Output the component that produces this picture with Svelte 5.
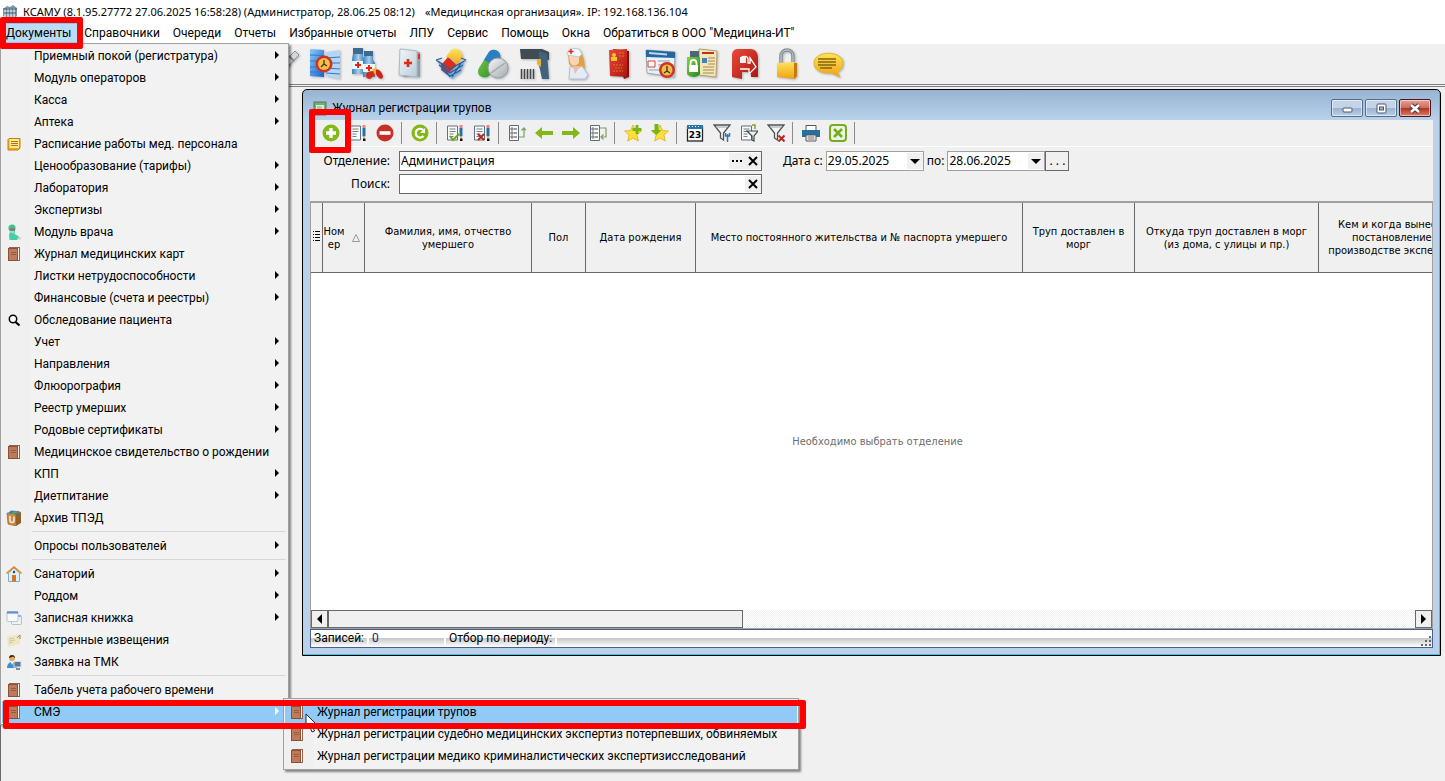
<script lang="ts">
  interface MenuItem {
    text?: string;
    icon?: string;
    sub?: boolean;
    sep?: boolean;
  }

  const topMenu = ['Документы', 'Справочники', 'Очереди', 'Отчеты', 'Избранные отчеты', 'ЛПУ', 'Сервис', 'Помощь', 'Окна', 'Обратиться в ООО "Медицина-ИТ"'];

  const menu: MenuItem[] = [
    { text: 'Приемный покой (регистратура)', sub: true },
    { text: 'Модуль операторов', sub: true },
    { text: 'Касса', sub: true },
    { text: 'Аптека', sub: true },
    { text: 'Расписание работы мед. персонала', icon: 'note' },
    { text: 'Ценообразование (тарифы)', sub: true },
    { text: 'Лаборатория', sub: true },
    { text: 'Экспертизы', sub: true },
    { text: 'Модуль врача', icon: 'surgeon', sub: true },
    { text: 'Журнал медицинских карт', icon: 'book' },
    { text: 'Листки нетрудоспособности', sub: true },
    { text: 'Финансовые (счета и реестры)', sub: true },
    { text: 'Обследование пациента', icon: 'search' },
    { text: 'Учет', sub: true },
    { text: 'Направления', sub: true },
    { text: 'Флюорография', sub: true },
    { text: 'Реестр умерших', sub: true },
    { text: 'Родовые сертификаты', sub: true },
    { text: 'Медицинское свидетельство о рождении', icon: 'book' },
    { text: 'КПП', sub: true },
    { text: 'Диетпитание', sub: true },
    { text: 'Архив ТПЭД', icon: 'archive' },
    { sep: true },
    { text: 'Опросы пользователей', sub: true },
    { sep: true },
    { text: 'Санаторий', icon: 'house', sub: true },
    { text: 'Роддом', sub: true },
    { text: 'Записная книжка', icon: 'windows', sub: true },
    { text: 'Экстренные извещения', icon: 'letter' },
    { text: 'Заявка на ТМК', icon: 'person' },
    { sep: true },
    { text: 'Табель учета рабочего времени', icon: 'book' }
  ];

  const submenu = [
    'Журнал регистрации трупов',
    'Журнал регистрации судебно медицинских экспертиз потерпевших, обвиняемых',
    'Журнал регистрации медико криминалистических экспертизисследований'
  ];

  const small: Record<string, string> = {
    app: '<path d="M1 5l4-3 3 1 3-2 4 3v8l-4 3-3-1-3 1-4-3z" fill="#7b96a6"/><path d="M3 5v8M6 4v10M9 4v10M12 4v9" stroke="#dfeaf0" stroke-width="1.3"/><path d="M1 5h14M2 9h12" stroke="#3f5666"/>',
    note: '<path d="M3 2.500h11v9.500l-2 2H2V3.500z" fill="#f0a820" stroke="#c98008"/><rect x="3.500" y="3" width="9.500" height="9" fill="#ffe890"/><path d="M5 5.500h7M5 7.500h7M5 9.500h7" stroke="#a87b18"/>',
    surgeon: '<circle cx="6" cy="4" r="3.600" fill="#3fbf9b"/><path d="M4 4.500h5v2H4z" fill="#a06a50"/><path d="M4 7h5l-.5 3L13 12.500l-2 3.500H3.500L3 11z" fill="#49cda8"/><path d="M4 7h4v2H4.500z" fill="#8fe6cd"/><path d="M12 14l3-1v2l-4 1z" fill="#ccc"/>',
    book: '<path d="M3 1h11v14H3z" fill="#96604a"/><path d="M4 2h8.500v1H4zM12 2h1v12h-1z" fill="#fbf3ee"/><rect x="2" y="2" width="10" height="13" fill="#8a5139"/><rect x="3" y="3" width="8" height="11" fill="#bf7a5c"/><path d="M5 6.500h5M5 8.500h5" stroke="#9a5a40"/>',
    search: '<circle cx="7" cy="7" r="3.700" fill="#fff" stroke="#000" stroke-width="1.500"/><path d="M9.500 10l4 3.500" stroke="#000" stroke-width="2.200"/>',
    archive: '<path d="M1 3l9 1v12l-8-2z" fill="#c98b45" stroke="#8a5a24" stroke-width=".6"/><path d="M10 4l5-2v11l-5 3z" fill="#945f27"/><path d="M2 3l3-2.500 6 .5 4 1-5 2.500z" fill="#2d7fd0"/><path d="M6 2l5-1v2l-4 1z" fill="#4fae35"/><path d="M11 1l2 .5-1 1z" fill="#d33"/><path d="M4 6v4.500c0 2.500 4 2.500 4 0V6.500" fill="none" stroke="#f5ead8" stroke-width="1.500"/>',
    house: '<path d="M2.500 7L8 2l5.500 5v8.500h-11z" fill="#d9effa" stroke="#7eb0cb"/><path d="M.5 7.500L8 1l7.500 6.500" fill="none" stroke="#e58b2c" stroke-width="1.600"/><rect x="6" y="9" width="4" height="6.500" fill="#d9751c"/><circle cx="8" cy="6" r="1.200" fill="#27455c"/>',
    windows: '<rect x="5.500" y="5.500" width="10" height="9" rx="1" fill="#eef1f4" stroke="#b4bfc8"/><path d="M11 6h4" stroke="#8eb0dc" stroke-width="2"/><rect x="1" y="1.500" width="11" height="10" rx="1" fill="#f7f9fb" stroke="#bac5ce"/><path d="M1 2.500h11" stroke="#6292d6" stroke-width="2.200"/>',
    letter: '<path d="M1 4l14-2-1 10-12 3z" fill="#eee6c4"/><path d="M3 7l5-1M3 9l6-1M3 11l4-.6" stroke="#d3c69a"/><path d="M11 6l3-3v4" stroke="#8e8e84" fill="none"/>',
    person: '<circle cx="6" cy="4" r="3" fill="#e3a65a"/><path d="M3 4c0-4 6-4 6 0L7 2.500z" fill="#30251c"/><path d="M1 14c0-8 10-8 10 0z" fill="#3f8fd0"/><path d="M5 8l1 3 1.500-3z" fill="#fff"/><rect x="8" y="7.500" width="7" height="5.500" fill="#587b96" stroke="#d4dde4"/><path d="M10 15h4" stroke="#667" stroke-width="1.500"/>',
    green: '<rect x="2" y="2" width="12" height="13" fill="#6fae74" stroke="#4c7f56"/><path d="M4 5h8v7H4z" fill="#d9efd6"/><path d="M5 7h5M5 9h5" stroke="#6fae74"/>'
  };

  // 32x32 pictures of the main toolbar
  const big: [string, string][] = [
    ['Процедуры', '<path d="M8 27L24 7l4-4 4 4-4 4L14 26z" fill="#d5d8da" stroke="#8d9296"/><path d="M22 8l5 5M18 13l5 5" stroke="#85898d" stroke-width="2"/>'],
    ['Расписание', '<path d="M1 1l14 1v27L1 28z" fill="url(#blue)"/><path d="M17 4l14-2v29l-14-3z" fill="#b4d6f3"/><path d="M1 7l14 .5M1 13h14M1 19h14M1 24h14M17 10l14-1M17 15h14M17 20l14 1M17 25l14 1" stroke="#2f78c8"/><circle cx="15" cy="16" r="8.500" fill="#cf3224"/><circle cx="15" cy="16" r="6" fill="#f5bf48"/><path d="M15 12v4l-3 3M15 16l3 2" fill="none" stroke="#40331d" stroke-width="1.300"/>'],
    ['Аптека', '<path d="M2 5h10v4l2 3v14H1V12z" fill="url(#glass)"/><path d="M13 8h9v4l2 3v14H12V14z" fill="url(#glass)"/><path d="M2 0h10v6H2zM13 3h9v5h-9z" fill="#3e6991"/><path d="M1 13h11v8H1zM12 16h12v8H12z" fill="#eef6fa"/><path d="M7 14v6M4 17h6M18 17v6M15 20h6" stroke="#e02418" stroke-width="2"/><path d="M15 27c0-3 3-4 8-4l1 4-5 4c-2 0-4-1-4-3z" fill="#d4281b"/><path d="M21 21l4-1 3 4-4 3z" fill="#f4b71b"/><path d="M25 22c3-2 7 4 7 7-1 3-5 2-7-3z" fill="#ce2418"/>'],
    ['Медкарта', '<path d="M12 4h15v25H10z" fill="#8f9ea8"/><path d="M7 1l17 2v26L6 27z" fill="url(#page)" stroke="#a9b9c3"/><path d="M25 6h2v5h-2z" fill="#d62f22"/><path d="M15 11v8M11 15h8" stroke="#e1271b" stroke-width="2.600"/>'],
    ['Закупки', '<path d="M2 12l13 9 15-9-4 12-9 7-10-8z" fill="#7fb0dc"/><path d="M6 17l7-8 9 8-7 7c-5 1-9-2-9-7z" fill="#dd2d1f"/><path d="M11 9l5-7c5-4 14 2 11 8l-6 8c0-5-4-8-10-9z" fill="url(#gold)"/><path d="M1 12l14 9 16-9M4 17l11 8 13-8M6 21l9 7 11-6M6 15l9 14M26 15l-9 14M1 12l6-2M26 10l5 2" fill="none" stroke="#2a5f98" stroke-width="1.300"/>'],
    ['Препараты', '<path d="M12 4c5-6 15 1 10 9l-9 14c-6 6-15 0-11-7z" fill="url(#green)"/><path d="M12 4c5-6 15 1 10 9l-3 5-12-6z" fill="#2b7dc4"/><circle cx="21" cy="20" r="10" fill="url(#silver)" stroke="#969da2"/><path d="M14 25l14-10" stroke="#a0a7ab" stroke-width="1.500"/>'],
    ['Сканер', '<path d="M1 1h22l7 3v8l-9-1H2z" fill="#414b52"/><path d="M20 3l8 3 1 11 1 14h-7l-3-14z" fill="#43627c"/><path d="M18 11h4v8l-4-3z" fill="#e3b52f"/><path d="M2.500 21v10M5.500 21v10M8.500 21v10M11.500 21v10M14.500 21v10" stroke="#444" stroke-width="1.500"/>'],
    ['Медсестра', '<path d="M7 5c4-6 15-3 16 7l1 8-8 2-8-6z" fill="#e0a23d"/><path d="M8 8c1-3 9-3 10 1v5c-1 4-8 5-9 0z" fill="#f9d5b2"/><path d="M6 5l4-5 8 1 3 5-3 3-11-2z" fill="#f3f7fa" stroke="#c1c9cf"/><path d="M10 1v5M7.500 3.500h5" stroke="#e1291c" stroke-width="1.500"/><path d="M9 18l6 3 6-3 6 9-3 4H8z" fill="#e5ebf4" stroke="#b4bfcc"/><path d="M12 18l2 8 5-8z" fill="#f3b9a6"/>'],
    ['Журнал', '<path d="M10 1l16 2v26l-5 2z" fill="#80140d"/><path d="M6 2l18-1v28L7 28z" fill="url(#red)"/><path d="M8 9h6v4H8z" fill="#f4c52b"/><circle cx="11" cy="7" r="2" fill="#f4c52b"/><path d="M16 5h5M16 8h5M10 17h10M12 20h7M10 23h10" stroke="#e37427" stroke-dasharray="2 1"/>'],
    ['Календарь', '<path d="M1 2l29 2-1 25-27-4z" fill="#edf1f4" stroke="#9aa8b5"/><path d="M1 2l29 2v6L1 9z" fill="#22669f"/><path d="M4 5l18 1.500" stroke="#bcd9ef" stroke-width="2"/><path d="M3 13h7v6H3z" fill="#fff" stroke="#d9423a"/><path d="M13 13h12M13 17h8M4 22h10" stroke="#b0bbc3" stroke-width="1.500"/><circle cx="22" cy="22" r="8" fill="#cb3427"/><circle cx="22" cy="22" r="5.500" fill="#f2bc48"/><path d="M22 18v5l-3 2M22 23l3 2" fill="none" stroke="#352d22" stroke-width="1.300"/>'],
    ['Доступ', '<path d="M12 1l18 2-1 26-17-2z" fill="#f5e6b5" stroke="#b49e65"/><path d="M15 5h12" stroke="#bd3028" stroke-width="2"/><path d="M15 10h5v5h-5z" fill="#3c83bd"/><path d="M21 10h7M21 13h7M21 16h7M16 19h11M16 22h11M16 25h11" stroke="#a18959"/><path d="M3 3h9v7H3z" fill="#516674"/><path d="M0 9h13v17c-3 4-10 4-13 0z" fill="url(#green)"/><path d="M3.500 18v-3c0-4 6-4 6 0v3" fill="none" stroke="#fff" stroke-width="1.800"/><rect x="2" y="17" width="9" height="7" fill="#fff"/>'],
    ['Выход', '<path d="M3 6c1-4 3-5 7-5h11c6 0 8 4 8 9v19h-7v-3l-4-2h-5v7l-10-2z" fill="url(#red)"/><path d="M11 9h6v6h-6z" fill="#efefef"/><path d="M12 15v-4c0-4 7-3 7 0v4h2v-5l6 9-7 7v-5h-9" fill="none" stroke="#fff" stroke-width="1.300"/>'],
    ['Блокировка', '<path d="M10 16V8c0-8 12-8 12 0v7" fill="none" stroke="#848d94" stroke-width="3.500"/><path d="M10 16V8c0-8 12-8 12 0v7" fill="none" stroke="#ccd3d7"/><path d="M6 15l17-1 3 1v13l-3 3-17-2z" fill="url(#gold)"/><path d="M23 15h3v13l-3 3z" fill="#c37b0e"/>'],
    ['Сообщения', '<path d="M1 15c0-13 29-13 29 0 0 5-3 8-6 9l3 5-9-4C8 26 1 22 1 15z" fill="url(#gold)" stroke="#e3b42a"/><path d="M5 11h18M5 14h18M5 17h18M7 20h12" stroke="#84660f" stroke-width="1.300"/>']
  ];

  const sheet = '<path d="M1.500 2h10v14h-10z" fill="#f7f9fa" stroke="#60717c"/><path d="M3.500 5h6M3.500 7.500h6M3.500 10h4M3.500 12.500h4" stroke="#73828b"/>';
  const pencil = '<path d="M13.500 1h3v3h-3z" fill="#e68383"/><path d="M13.500 4h3v8h-3z" fill="#2a6ea3"/><path d="M13.500 12h3L15 15z" fill="#dba65e"/><path d="M14 14.500h2.500V17H14z" fill="#111"/>';
  const tree = '<path d="M1.500 1.500h9v15h-9z" fill="#f7f9fa" stroke="#5b6d78"/><path d="M3 4h2v2H3zM3 8h2v2H3zM3 12h2v2H3z" fill="none" stroke="#555" stroke-width=".8"/><path d="M6 5h3M6 9h3M6 13h3" stroke="#444"/>';
  const funnel = '<path d="M1 1h16l-6.500 8v7l-3-2V9z" fill="#f5f5f5" stroke="#4c5459" stroke-width="1.300"/><path d="M3 3h11" stroke="#9da5a9"/>';
  const star = '<path d="M9 1l2.400 5.500 6 .5-4.500 4 1.400 6L9 14l-5.300 3 1.400-6L.6 7l6-.5z" fill="#ffdf38" stroke="#dcae20" stroke-width=".8"/>';

  // null is a divider
  const tools: ([string, string] | null)[] = [
    ['Добавить', '<circle cx="9" cy="9" r="8.500" fill="#82b817"/><path d="M9 4v10M4 9h10" stroke="#fff" stroke-width="3.400"/>'],
    ['Изменить', sheet + pencil],
    ['Удалить', '<circle cx="9" cy="9" r="8.500" fill="#c63127"/><path d="M3.500 9h11" stroke="#fff" stroke-width="3.600"/>'],
    null,
    ['Обновить', '<circle cx="9" cy="9" r="8.500" fill="#82b817"/><path d="M12 5.800A4.400 4.400 0 1 0 12.500 12" fill="none" stroke="#fff" stroke-width="2.200"/><path d="M14 4v5H9z" fill="#fff"/>'],
    null,
    ['Подтвердить', sheet + pencil + '<path d="M4 12l3 4 6-6" fill="none" stroke="#6aa622" stroke-width="2"/>'],
    ['Отменить', sheet + pencil + '<path d="M5 10l6 6M11 10l-6 6" stroke="#b62b22" stroke-width="2"/>'],
    null,
    ['Развернуть', tree + '<path d="M11 13h5V4M13.500 6.500L16 4l2 2.500" fill="none" stroke="#7e9f61" stroke-width="1.200"/>'],
    ['Назад', '<path d="M0 9l7-6v4h11v4H7v4z" fill="#82b817"/>'],
    ['Вперед', '<path d="M18 9l-7-6v4H0v4h11v4z" fill="#82b817"/>'],
    ['Свернуть', tree + '<path d="M11 4h6v9h-5M14.500 10.500L12 13l2.500 2.500" fill="none" stroke="#7e9f61" stroke-width="1.200"/>'],
    null,
    ['В избранное', star + '<path d="M13 1v9M8.500 5.500h9" stroke="#77b51b" stroke-width="3"/>'],
    ['Из избранного', star + '<path d="M3.500 0h4v6h3L5.500 11 0 6h3.500z" fill="#77b51b"/>'],
    null,
    ['Дата', '<rect x="1.500" y="3" width="15" height="14" fill="#fff" stroke="#222" stroke-width="1.300"/><path d="M1 1h16v4H1z" fill="#2878af"/><path d="M3 2.500h12" stroke="#fff" stroke-dasharray="1 2"/><text x="9" y="14" text-anchor="middle" font-size="9" font-family="DejaVu Sans" font-weight="700">23</text>'],
    ['Фильтр', funnel + '<path d="M14.500 10v8M12.500 9v3h4V9" stroke="#3076aa" stroke-width="1.500" fill="none"/>'],
    ['Фильтр списка', sheet + '<path d="M12 1h3v4" fill="none" stroke="#78a827" stroke-width="1.500"/><path d="M7 7h11l-4 5v5l-2-1v-4z" fill="#eee" stroke="#3f474b" stroke-width="1.200"/>'],
    ['Снять фильтр', funnel + '<path d="M11.500 11.500l6 6M17.500 11.500l-6 6" stroke="#b62b22" stroke-width="2"/>'],
    null,
    ['Печать', '<path d="M4 1.500h10v5H4z" fill="#fff" stroke="#555"/><path d="M0 6h18v7H0z" fill="#276f9e"/><path d="M4 11h10v6H4z" fill="#fff" stroke="#555"/><path d="M5.500 13h7M5.500 15h7" stroke="#666"/>'],
    ['Excel', '<rect x="1" y="1" width="16" height="16" rx="3" fill="#eef4e4" stroke="#74ae20" stroke-width="2"/><path d="M5 5l8 8M13 5l-8 8" stroke="#74ae20" stroke-width="2.600"/>'],
    null
  ];

  const columns = [
    { text: '', width: 12 },
    { text: 'Номер', width: 42 },
    { text: 'Фамилия, имя, отчество умершего', width: 167 },
    { text: 'Пол', width: 54 },
    { text: 'Дата рождения', width: 110 },
    { text: 'Место постоянного жительства и № паспорта умершего', width: 327 },
    { text: 'Труп доставлен в морг', width: 112 },
    { text: 'Откуда труп доставлен в морг (из дома, с улицы и пр.)', width: 184 },
    { text: 'Кем и когда вынесено постановление о производстве экспертизы', width: 156 }
  ];

  let department = $state('Администрация');
  let query = $state('');
  let dateFrom = $state('29.05.2025');
  let dateTo = $state('28.06.2025');
</script>

{#snippet icon(body: string, size: number)}
  <svg class="icon" width={size} height={size} viewBox="0 0 {size} {size}" aria-hidden="true">{@html body}</svg>
{/snippet}

<svg class="defs" width="0" height="0" aria-hidden="true">
  <defs>
    <linearGradient id="blue" x2="1" y2="1"><stop stop-color="#8cc8f5" /><stop offset="1" stop-color="#1263d0" /></linearGradient>
    <linearGradient id="glass" x2="1"><stop stop-color="#3b7fb8" /><stop offset=".5" stop-color="#a4d1ec" /><stop offset="1" stop-color="#3672a5" /></linearGradient>
    <linearGradient id="page" x2="1" y2="1"><stop stop-color="#f4f8fa" /><stop offset="1" stop-color="#b9cad5" /></linearGradient>
    <linearGradient id="gold" x2="0" y2="1"><stop stop-color="#ffe357" /><stop offset="1" stop-color="#f0a015" /></linearGradient>
    <linearGradient id="green" x2="1" y2="1"><stop stop-color="#7fd34d" /><stop offset="1" stop-color="#258721" /></linearGradient>
    <linearGradient id="silver" x2="1" y2="1"><stop stop-color="#f6f6f6" /><stop offset="1" stop-color="#a5abaf" /></linearGradient>
    <linearGradient id="red" x2="1" y2="1"><stop stop-color="#e84a3a" /><stop offset="1" stop-color="#ac160e" /></linearGradient>
  </defs>
</svg>

<div class="app">
  <header class="title-bar">
    {@render icon(small.app, 16)}
    <span>КСАМУ (8.1.95.27772 27.06.2025 16:58:28) (Администратор, 28.06.25 08:12)</span>
    <span class="org">«Медицинская организация». IP: 192.168.136.104</span>
  </header>

  <nav class="menu-bar">
    {#each topMenu as item, i}
      <div class="menu-slot">
        <button class="menu-top" class:open={i === 0}>{item}</button>
        {#if i === 0}
          <div class="menu">
            {#each menu as entry}
              {#if entry.sep}
                <hr />
              {:else}
                <button class="menu-item">
                  <span class="menu-icon">{#if entry.icon}{@render icon(small[entry.icon], 16)}{/if}</span>
                  <span class="menu-text">{entry.text}</span>
                  {#if entry.sub}<span class="arrow"></span>{/if}
                </button>
              {/if}
            {/each}
            <div class="menu-slot">
              <button class="menu-item active">
                <span class="menu-icon">{@render icon(small.book, 16)}</span>
                <span class="menu-text">СМЭ</span>
                <span class="arrow"></span>
              </button>
              <div class="menu submenu">
                {#each submenu as text, n}
                  <button class="menu-item" class:active={n === 0}>
                    <span class="menu-icon">{@render icon(small.book, 16)}</span>
                    <span class="menu-text">{text}</span>
                  </button>
                {/each}
                <svg class="cursor" width="13" height="20" viewBox="0 0 13 20" aria-hidden="true">
                  <path d="M1 1v15l3.500-3 2.500 6 2.500-1-2.500-6H12z" fill="#fff" stroke="#222" />
                </svg>
              </div>
              <div class="mark mark-row"></div>
            </div>
          </div>
          <div class="mark mark-menu"></div>
        {/if}
      </div>
    {/each}
  </nav>

  <div class="main-tools">
    {#each big as [name, body]}
      <button aria-label={name}>{@render icon(body, 32)}</button>
    {/each}
  </div>

  <main class="desktop">
    <section class="window">
      <div class="window-title">
        {@render icon(small.green, 16)}
        <h1>Журнал регистрации трупов</h1>
        <div class="window-buttons">
          <button aria-label="Свернуть">
            <svg width="11" height="11" viewBox="0 0 11 11"><rect x="1" y="5" width="9" height="4" rx="1" fill="#fff" stroke="#4b566b" /></svg>
          </button>
          <button aria-label="Развернуть">
            <svg width="11" height="11" viewBox="0 0 11 11"><rect x="1" y="1" width="9" height="9" rx="1" fill="#fff" stroke="#4b566b" /><rect x="3.500" y="4" width="4" height="3" fill="#9ab6d6" stroke="#4b566b" /></svg>
          </button>
          <button class="close" aria-label="Закрыть">
            <svg width="12" height="11" viewBox="0 0 12 11"><path d="M2 2l8 7M10 2l-8 7" stroke="#4f3740" stroke-width="4.500" /><path d="M2 2l8 7M10 2l-8 7" stroke="#fff" stroke-width="2.500" /></svg>
          </button>
        </div>
      </div>

      <div class="content">
        <div class="tools">
          {#each tools as tool, i}
            {#if tool}
              <button class="tool" aria-label={tool[0]}>
                {@render icon(tool[1], 18)}
                {#if i === 0}<span class="mark mark-tool"></span>{/if}
              </button>
            {:else}
              <span class="divider"></span>
            {/if}
          {/each}
        </div>

        <form class="filters">
          <label for="department">Отделение:</label>
          <div class="field wide">
            <input id="department" type="text" bind:value={department} />
            <button type="button" aria-label="Выбрать">
              <svg width="12" height="12" viewBox="0 0 12 12"><path d="M1 5h2v2H1zM5 5h2v2H5zM9 5h2v2H9z" /></svg>
            </button>
            <button type="button" aria-label="Очистить">
              <svg width="12" height="12" viewBox="0 0 12 12"><path d="M2 2l8 8M10 2l-8 8" stroke="#000" stroke-width="2" /></svg>
            </button>
          </div>
          <div class="period">
            <label for="from">Дата с:</label>
            <div class="field date">
              <input id="from" type="text" bind:value={dateFrom} />
              <button type="button" aria-label="Открыть календарь"><span class="down"></span></button>
            </div>
            <label for="to">по:</label>
            <div class="field date">
              <input id="to" type="text" bind:value={dateTo} />
              <button type="button" aria-label="Открыть календарь"><span class="down"></span></button>
            </div>
            <button type="button" class="more">. . .</button>
          </div>
          <label for="query">Поиск:</label>
          <div class="field wide">
            <input id="query" type="text" bind:value={query} />
            <button type="button" aria-label="Очистить">
              <svg width="12" height="12" viewBox="0 0 12 12"><path d="M2 2l8 8M10 2l-8 8" stroke="#000" stroke-width="2" /></svg>
            </button>
          </div>
        </form>

        <div class="grid">
          <table>
            <colgroup>
              {#each columns as col}
                <col style="width: {col.width}px" />
              {/each}
            </colgroup>
            <thead>
              <tr>
                {#each columns as col, i}
                  <th class:narrow={i < 2}>
                    {#if i === 0}
                      <svg width="8" height="10" viewBox="0 0 8 10"><path d="M2 .5h5M2 3.500h5M2 6.500h5M2 9.500h5" stroke="#000" /><path d="M0 .5h1M0 3.500h1M0 6.500h1M0 9.500h1" stroke="#000" /></svg>
                    {:else if i === 1}
                      <div class="sorted">
                        <span>{col.text}</span>
                        <svg width="8" height="8" viewBox="0 0 8 8"><path d="M.5 7.500h7L4 .5z" fill="none" stroke="#999" /></svg>
                      </div>
                    {:else}
                      {col.text}
                    {/if}
                  </th>
                {/each}
              </tr>
            </thead>
          </table>
          <p class="empty">Необходимо выбрать отделение</p>
          <div class="scroll">
            <button aria-label="Прокрутить влево"><span class="left"></span></button>
            <div class="thumb"></div>
            <div class="track"></div>
            <button aria-label="Прокрутить вправо"><span class="right"></span></button>
          </div>
        </div>

        <footer class="status">
          <span class="cell">Записей:</span>
          <span class="cell count">0</span>
          <span class="cell">Отбор по периоду:</span>
          <svg class="grip" width="12" height="12" viewBox="0 0 12 12" aria-hidden="true"><path d="M9 1h2v2H9zM9 5h2v2H9zM9 9h2v2H9zM5 5h2v2H5zM5 9h2v2H5zM1 9h2v2H1z" fill="#666" /></svg>
        </footer>
      </div>
    </section>
  </main>
</div>

<style>
  :global(body) {
    overflow: hidden;
  }

  .app {
    display: flex;
    flex-direction: column;
    height: 100vh;
    background: #f0f0f0;
    color: #000;
    font-family: Roboto, 'Noto Sans', sans-serif;
    font-size: 12px;
    line-height: 16px;
    white-space: nowrap;
  }

  .defs {
    position: absolute;
  }

  .icon {
    display: block;
    flex: none;
  }

  button {
    margin: 0;
    padding: 0;
    border: 0;
    background: none;
    color: inherit;
    font: inherit;
  }

  .title-bar {
    display: flex;
    align-items: center;
    height: 23px;
    padding-left: 2px;
    background: #fff;
    font-family: 'Noto Sans', 'Open Sans', sans-serif;
    font-size: 11px;
  }

  .title-bar .icon {
    margin-right: 5px;
  }

  .org {
    margin-left: 10px;
  }

  .menu-bar {
    display: flex;
    height: 20px;
    background: #fff;
  }

  .menu-slot {
    position: relative;
  }

  .menu-top {
    height: 20px;
    padding: 0 7px 0 6px;
  }

  .menu-top.open {
    background: #b9ddf7;
    box-shadow: inset 0 0 0 1px #8dc4ee;
  }

  .menu {
    position: absolute;
    top: 100%;
    left: 0;
    z-index: 5;
    box-sizing: border-box;
    width: 289px;
    padding: 1px;
    border: 1px solid #a0a0a0;
    background: linear-gradient(90deg, #f0f0f0 30px, #f2f2f2 30px);
    box-shadow: 2px 2px 2px rgba(0, 0, 0, 0.45);
  }

  .menu-item {
    display: flex;
    align-items: center;
    width: 100%;
    height: 22px;
    padding: 0 8px 0 4px;
    text-align: left;
  }

  .menu-item.active {
    background: #91c9f7;
  }

  .menu-icon {
    flex: none;
    width: 28px;
  }

  .menu-text {
    flex: 1;
  }

  .arrow {
    margin-bottom: 2px;
    border: 4px solid transparent;
    border-left-color: #000;
    border-right: 0;
  }

  .active .arrow {
    border-left-color: #fff;
  }

  hr {
    height: 1px;
    margin: 2px 1px 3px 30px;
    border: 0;
    background: #d7d7d7;
  }

  .submenu {
    top: -3px;
    left: 281px;
    width: 516px;
    padding: 2px 1px;
  }

  .cursor {
    position: absolute;
    top: 14px;
    left: 21px;
  }

  .mark {
    position: absolute;
    z-index: 6;
    box-sizing: border-box;
    border: 6px solid #f00;
    border-radius: 2px;
    pointer-events: none;
  }

  .mark-menu {
    inset: -6px -5px -6px 0;
  }

  .mark-row {
    top: -1px;
    left: 1px;
    width: 803px;
    height: 29px;
  }

  .mark-tool {
    inset: -11px -7px -7px -8px;
  }

  .main-tools {
    display: flex;
    align-items: center;
    height: 40px;
    padding-left: 262px;
    border-top: 1px solid #fff;
  }

  .main-tools button {
    display: flex;
    justify-content: center;
    width: 42px;
  }

  .main-tools .icon {
    filter: drop-shadow(1px 1px 1px rgba(60, 70, 90, 0.35));
  }

  .desktop {
    display: flex;
    flex: 1;
    min-height: 0;
    padding: 2px 4px 125px 301px;
    border-top: 3px double #808080;
    border-left: 1px solid #696969;
  }

  .window {
    display: flex;
    flex: 1;
    flex-direction: column;
    min-width: 0;
    padding: 0 7px 7px;
    border: 1px solid #000;
    border-radius: 5px 5px 0 0;
    background: linear-gradient(#98b4d2, #b9d1ea 30px);
    box-shadow: inset -1px -1px 0 #2fc8e6;
  }

  .window-title {
    display: flex;
    align-items: center;
    height: 24px;
    padding: 6px 2px 0;
  }

  h1 {
    flex: 1;
    margin: 0 0 0 4px;
    font: inherit;
  }

  .window-buttons {
    display: flex;
    gap: 2px;
  }

  .window-buttons button {
    display: flex;
    align-items: center;
    justify-content: center;
    width: 32px;
    height: 18px;
    box-sizing: border-box;
    border: 1px solid #566d8e;
    border-radius: 2px;
    background: linear-gradient(#c3d4e8 50%, #98b2cf 50%, #b8d0e8);
    box-shadow: inset 0 0 0 1px rgba(255, 255, 255, 0.5);
  }

  .window-buttons .close {
    border-color: #4b1620;
    background: linear-gradient(#e3a296, #cf6a58 50%, #b0311b 50%, #d5806c);
  }

  .content {
    display: flex;
    flex: 1;
    flex-direction: column;
    min-height: 0;
    background: #f0f0f0;
  }

  .tools {
    display: flex;
    align-items: center;
    height: 26px;
    padding-left: 7px;
    border-bottom: 1px solid #fff;
  }

  .tool {
    position: relative;
    display: flex;
    align-items: center;
    justify-content: center;
    width: 27px;
    height: 26px;
  }

  .divider {
    width: 1px;
    height: 22px;
    margin: 0 4px 0 3px;
    background: #8b8b8b;
  }

  .filters {
    display: grid;
    grid-template-columns: 80px 363px 1fr;
    gap: 3px 9px;
    padding: 4px 0 7px;
    font-family: 'Noto Sans', 'Open Sans', sans-serif;
  }

  .filters label {
    line-height: 20px;
    text-align: right;
  }

  .field {
    display: flex;
    box-sizing: border-box;
    height: 20px;
    border: 1px solid #696969;
    background: #fff;
  }

  .field input {
    flex: 1;
    min-width: 0;
    padding: 0 1px;
    border: 0;
    outline: 0;
    background: none;
    color: #000;
    font: inherit;
  }

  .field button {
    display: flex;
    align-items: center;
    justify-content: center;
    width: 16px;
    margin: 1px 0;
    background: #f0f0f0;
  }

  .field.date {
    width: 98px;
    border-color: #a0a0a0;
  }

  .down {
    border: 5px solid transparent;
    border-top-color: #000;
    border-bottom: 0;
  }

  .period {
    display: flex;
    gap: 3px;
    padding-left: 12px;
  }

  .more {
    box-sizing: border-box;
    width: 24px;
    height: 20px;
    margin-left: -3px;
    border: 1px solid #696969;
  }

  .grid {
    display: flex;
    flex: 1;
    flex-direction: column;
    min-height: 0;
    overflow: hidden;
    border: solid #a0a0a0;
    border-width: 2px 1px 1px;
    background: #fff;
    font-family: 'DejaVu Sans Condensed', 'DejaVu Sans', sans-serif;
    font-size: 11px;
    line-height: 13px;
  }

  table {
    flex: none;
    width: 1164px;
    border-collapse: separate;
    border-spacing: 0;
    table-layout: fixed;
  }

  th {
    height: 69px;
    padding: 0 8px;
    border-right: 1px solid #696969;
    border-bottom: 1px solid #696969;
    background: #f0f0f0;
    font-weight: 400;
    white-space: normal;
  }

  th.narrow {
    padding: 0;
  }

  .sorted {
    display: flex;
    align-items: center;
    gap: 7px;
  }

  .sorted span {
    width: 22px;
    overflow-wrap: anywhere;
  }

  .empty {
    display: flex;
    flex: 1;
    align-items: center;
    justify-content: center;
    margin: 0;
    padding-left: 12px;
    color: #6d6d6d;
  }

  .scroll {
    display: flex;
    height: 18px;
  }

  .scroll button,
  .thumb {
    display: flex;
    align-items: center;
    justify-content: center;
    box-sizing: border-box;
    width: 17px;
    border: 1px solid #696969;
    background: #f0f0f0;
  }

  .scroll .thumb {
    width: 37%;
  }

  .track {
    flex: 1;
    background: repeating-conic-gradient(#fff 0 25%, #f0f0f0 0 50%) 0 0 / 2px 2px;
  }

  .left,
  .right {
    border: 5px solid transparent;
  }

  .left {
    border-right-color: #000;
    border-left: 0;
  }

  .right {
    border-left-color: #000;
    border-right: 0;
  }

  .status {
    display: flex;
    box-sizing: border-box;
    height: 19px;
    border: 1px solid #48618a;
    background: linear-gradient(#fff 8px, #c6c6c6 8px, #fff);
    line-height: 17px;
  }

  .cell {
    padding: 0 3px;
    border-right: 2px solid #fff;
  }

  .count {
    width: 69px;
    color: #20207a;
  }

  .grip {
    align-self: flex-end;
    margin-left: auto;
  }
</style>
